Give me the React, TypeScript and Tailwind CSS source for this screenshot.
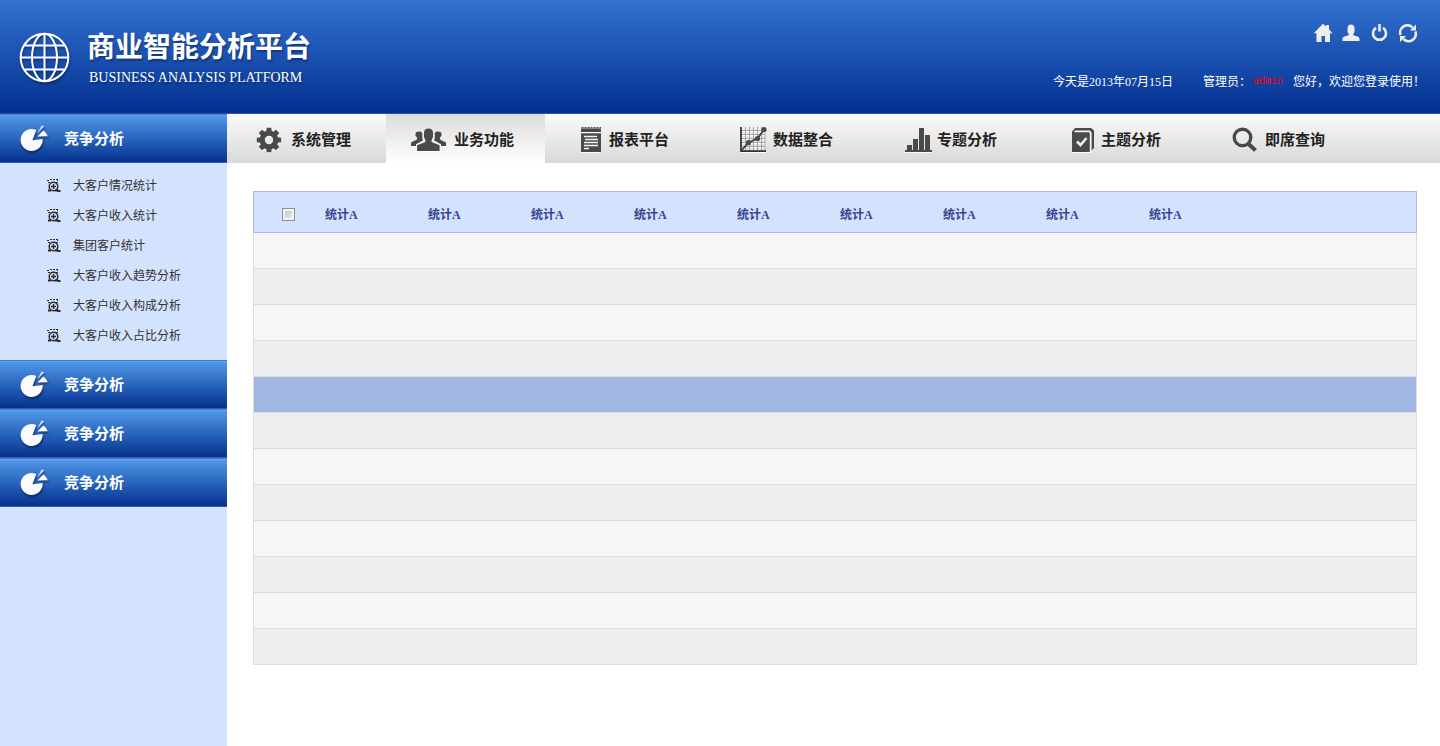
import { useState } from 'react'
import type { ReactNode } from 'react'

const subItems = ['大客户情况统计', '大客户收入统计', '集团客户统计', '大客户收入趋势分析', '大客户收入构成分析', '大客户收入占比分析']
const columns = Array.from({ length: 9 }, () => '统计A')
const rows = Array.from({ length: 12 }, (_, i) => i)

function GlobeLogo() {
  return (
    <svg viewBox="0 0 52 52" className="w-[52px] h-[52px] shrink-0 drop-shadow-[1px_2px_1px_rgba(0,0,0,0.35)]" fill="none" stroke="#fff" strokeWidth="2">
      <circle cx="25.5" cy="26.5" r="23.8" />
      <ellipse cx="25.500" cy="26.500" rx="12.5" ry="23.8" />
      <path d="M25.500 3v47M2 26.500h47M6 14.500h39M6 38.500h39" />
    </svg>
  )
}

function PieIcon() {
  return (
    <svg viewBox="0 0 30 30" className="w-[30px] h-[30px] shrink-0 drop-shadow-[1px_2px_1px_rgba(0,0,0,0.4)]" fill="#fbfbff">
      <path d="M12.4 16.2 16.3 6A11 11 0 1 0 22.6 15.1Z" />
      <path d="M17.4 12.6 23.4 6.4Q26.8 8.8 27.8 12.2Z" />
      <path d="M17.2 9.6 21.6 1.4 24.2 2.2Z" fill="#cfe0fa" />
    </svg>
  )
}

function SearchBullet() {
  return (
    <svg viewBox="0 0 14 14" className="w-[14px] h-[14px] shrink-0" fill="none" stroke="#2b2b2b">
      <path d="M0 1.5h2M3 .5h2M6 .5h2M9 .5h2M10 1.500h1M1 3.500h2M9 3.500h2" />
      <circle cx="6.500" cy="7.500" r="4.300" strokeWidth="1.500" />
      <path d="M4 7.500h5M6.500 5v5" strokeWidth="1.400" />
      <path d="M1 11.500h3M8 11.500h3M9.500 10l1.500 2h2.500" strokeWidth="1.800" />
    </svg>
  )
}

function NavSvg({ wide, children }: { wide?: boolean; children: ReactNode }) {
  return (
    <svg viewBox={wide ? '0 0 40 28' : '0 0 36 28'} fill="#4a4a4a"
      className={`${wide ? 'w-10' : 'w-9'} h-7 shrink-0 drop-shadow-[0_1px_0_rgba(255,255,255,0.9)]`}>
      {children}
    </svg>
  )
}

const gear = (
  <NavSvg>
    <circle cx="18" cy="14" r="6.8" fill="none" stroke="#4a4a4a" strokeWidth="5.2" />
    {[0, 45, 90, 135, 180, 225, 270, 315].map((a) => (
      <path key={a} d="M15.2 6 15.700 1.800H20.300L20.800 6Z" transform={`rotate(${a} 18 14)`} />
    ))}
  </NavSvg>
)

const people = (
  <NavSvg wide>
    <path d="M14 6.500C14 4 16 2.600 18.500 2.600s4.500 1.400 4.500 3.900V11l-1.400 3v2l8 3.200V25h-22.500v-5.800l8.300-3.200v-2L14 11Z" />
    <path d="M5.500 7.800C5.500 6.200 7 5.400 9 5.400c1.700 0 3 .5 3.300 1.800v5.300L13 14.500 6 18.200V20H1v-3.600L7 13.500v-2L5.500 10Z" />
    <path d="M31.500 7.800C31.500 6.200 30 5.400 28 5.400c-1.700 0-3 .5-3.300 1.800v5.300l-.7 2 7 3.700V20h5v-3.600L30 13.500v-2l1.500-1.500Z" />
  </NavSvg>
)

const notepad = (
  <NavSvg>
    <path d="M12 2.500h20V6H12Z" />
    <path d="M12.500 1.700H32" fill="none" stroke="#4a4a4a" strokeWidth="1.600" strokeDasharray="2 1" />
    <path d="M12 7.300h20V26H12Z" />
    <path d="M15 10.500h13M16 13.500h13M15 16.500h14M15 19.500h14M15 22.500h5" fill="none" stroke="#f4f4f4" strokeWidth="1.300" />
  </NavSvg>
)

const chart = (
  <NavSvg>
    <path d="M12.500 1v24M16.500 1v24M20.500 1v24M24.500 1v24M28.500 1v24M32 5v20M8 4.500h24M8 8.500h24M8 12.500h24M8 16.500h24M8 20.500h24" fill="none" stroke="#a5a5a5" strokeWidth="1" />
    <path d="M8 1v24.200h25" fill="none" stroke="#333" strokeWidth="1.800" />
    <path d="M9 24 15.500 16.500 24.500 12.500 31 3.500" fill="none" stroke="#3c3c3c" strokeWidth="1.800" />
    <circle cx="15.500" cy="16.700" r="2.600" /><circle cx="24.500" cy="12.500" r="2.600" /><circle cx="31" cy="3.500" r="2.600" />
  </NavSvg>
)

const bars = (
  <NavSvg>
    <path d="M8 24h27v2H8ZM10 19h5v6h-5ZM16 13h5v12h-5ZM22 2h5v23h-5ZM28 9h5v16h-5Z" />
  </NavSvg>
)

const book = (
  <NavSvg>
    <path d="M11 5.500 14 2H30l3 2.500V22l-3 3.500L28.500 26H11Z" />
    <path d="M13.500 5.300H28.500L29.700 7V26" fill="none" stroke="#f6f6f6" strokeWidth="1.800" />
    <path d="M16 15.500 19.500 19 25.500 12" fill="none" stroke="#eee" strokeWidth="2.600" />
  </NavSvg>
)

const magnifier = (
  <NavSvg>
    <circle cx="17.500" cy="11.500" r="8.300" fill="none" stroke="#4a4a4a" strokeWidth="3.400" />
    <path d="M23 17.500 30.500 24.500" fill="none" stroke="#4a4a4a" strokeWidth="4.200" />
  </NavSvg>
)

const tabs = [
  { label: '系统管理', icon: gear, width: 'w-[159px]' },
  { label: '业务功能', icon: people, width: 'w-[159px]' },
  { label: '报表平台', icon: notepad, width: 'w-[164px]' },
  { label: '数据整合', icon: chart, width: 'w-[164px]' },
  { label: '专题分析', icon: bars, width: 'w-[164px]' },
  { label: '主题分析', icon: book, width: 'w-[164px]' },
  { label: '即席查询', icon: magnifier, width: 'w-[164px]' },
]

const tools = [
  { label: '首页', icon: <path d="M10 .8 13 3.600V2h3v4.300l3.500 3.900h-2.500V19h-5v-6H8.500v6h-5v-8.800H.8Z" /> },
  { label: '用户', icon: <path d="M6.500 5.500C6.500 3 7.800 1.500 10 1.500s3.500 1.500 3.500 4V9L12 11.500c.5 1.500 6.500 1.500 6.500 4V18h-17v-2.500c0-2.500 6-2.500 6.500-4L6.500 9Z" /> },
  { label: '退出', icon: <path d="M7 4.800A6.500 6.500 0 1 0 14 4.800M10.500 1V8.500" fill="none" stroke="#eee" strokeWidth="2.600" /> },
  {
    label: '刷新',
    icon: (
      <>
        <path d="M3.600 12A7.200 7.200 0 0 1 15.500 4.500M18.400 8.500A7.200 7.200 0 0 1 6.500 16" fill="none" stroke="#eee" strokeWidth="2.600" />
        <path d="M19 1.500v6h-6ZM3 19v-6h6Z" />
      </>
    ),
  },
]

function Header() {
  return (
    <header className="flex justify-between h-[114px] px-[19px] border-b border-[#2a54ae] bg-linear-to-b from-[#3372d1] to-[#052f90] text-white">
      <div className="flex items-center gap-4">
        <GlobeLogo />
        <div className="pt-1.5 [text-shadow:1px_2px_2px_rgba(0,0,0,0.35)]">
          <h1 className="text-[28px] leading-8 font-bold">商业智能分析平台</h1>
          <p className="mt-1 pl-0.5 text-[14px] leading-5">BUSINESS ANALYSIS PLATFORM</p>
        </div>
      </div>
      <div className="flex flex-col items-end justify-between pt-[23px] pb-[23px]">
        <div className="flex gap-2 pr-1">
          {tools.map((t) => (
            <button key={t.label} type="button" aria-label={t.label} className="w-5 h-5">
              <svg viewBox="0 0 20 20" className="w-5 h-5" fill="#eee">{t.icon}</svg>
            </button>
          ))}
        </div>
        <div className="flex leading-4">
          <span className="mr-[30px]">今天是2013年07月15日</span>
          <span>管理员：</span>
          <span className="mx-0.5 mr-[10px] text-[10px] text-[#f00] font-['Liberation_Mono',monospace]">admin</span>
          <span className="-mr-1">您好，欢迎您登录使用！</span>
        </div>
      </div>
    </header>
  )
}

function SideHeading({ open, onClick }: { open: boolean; onClick: () => void }) {
  return (
    <button type="button" aria-expanded={open} onClick={onClick}
      className="flex items-center w-full h-[49px] pl-5 gap-[14px] border-t border-b border-t-[#3c7cd8] border-b-[#3c5cb0] bg-linear-to-b from-[#5299ea] to-[#06318f] shadow-[inset_0_1px_0_#66a5ee] text-white text-[15px] font-bold">
      <PieIcon />
      <span className="pt-0.5">竞争分析</span>
    </button>
  )
}

function Sidebar() {
  const [open, setOpen] = useState(0)
  return (
    <aside className="w-[227px] shrink-0 bg-[#d3e2fd]">
      {[0, 1, 2, 3].map((i) => (
        <section key={i}>
          <SideHeading open={open === i} onClick={() => setOpen(i)} />
          {open === i && (
            <ul className="pt-2 pb-[9px]">
              {subItems.map((s) => (
                <li key={s}>
                  <a href="#" className="flex items-center h-[30px] pl-[47px] gap-3 text-[#333]">
                    <SearchBullet />
                    {s}
                  </a>
                </li>
              ))}
            </ul>
          )}
        </section>
      ))}
    </aside>
  )
}

function TopNav() {
  const [active, setActive] = useState(1)
  return (
    <nav className="flex h-[49px] bg-linear-to-b from-[#fafafa] to-[#d9d9d9]">
      {tabs.map((t, i) => (
        <a key={t.label} href="#" onClick={() => setActive(i)}
          className={`flex items-center gap-1 pl-6 pt-0.5 shrink-0 text-[15px] font-bold text-[#222] ${t.width} ${i === active ? 'bg-linear-to-b from-[#dcdcdc] to-white' : ''}`}>
          {t.icon}
          <span className="pt-0.5">{t.label}</span>
        </a>
      ))}
    </nav>
  )
}

function DataTable() {
  const [selected, setSelected] = useState(4)
  const rowColor = (i: number) => (i === selected ? 'bg-[#a0b6e3]' : i % 2 ? 'bg-[#edeef0]' : 'bg-[#f6f6f6]')
  return (
    <table className="w-full table-fixed border-separate border-spacing-0">
      <thead>
        <tr className="bg-[#d3e2fd] text-[#39438f] text-left">
          <th className="w-[72px] h-[42px] pl-7 border-y border-l border-[#b0b9e2]">
            <input type="checkbox" aria-label="全选"
              className="block appearance-none w-[13px] h-[13px] mt-1 border border-[#8e8f8f] bg-linear-to-br from-[#b4b9c4] to-[#f6f6f6] shadow-[inset_0_0_0_2px_#f4f4f4] checked:from-[#39438f]" />
          </th>
          {columns.map((c, i) => (
            <th key={i} className="w-[103px] pt-1.5 border-y border-[#b0b9e2] font-bold">{c}</th>
          ))}
          <th className="border-y border-r border-[#b0b9e2]" />
        </tr>
      </thead>
      <tbody>
        {rows.map((i) => (
          <tr key={i} onClick={() => setSelected(i)} className={rowColor(i)}>
            <td colSpan={11} className="h-9 border-x border-b border-[#dcdcdc]" />
          </tr>
        ))}
      </tbody>
    </table>
  )
}

export default function App() {
  return (
    <div className="flex flex-col min-h-screen bg-white text-xs font-['Liberation_Serif','Noto_Sans_CJK_SC',serif]">
      <Header />
      <div className="flex flex-1">
        <Sidebar />
        <div className="flex-1 min-w-0">
          <TopNav />
          <main className="pt-7 pb-7 pl-[26px] pr-[23px]">
            <DataTable />
          </main>
        </div>
      </div>
    </div>
  )
}
